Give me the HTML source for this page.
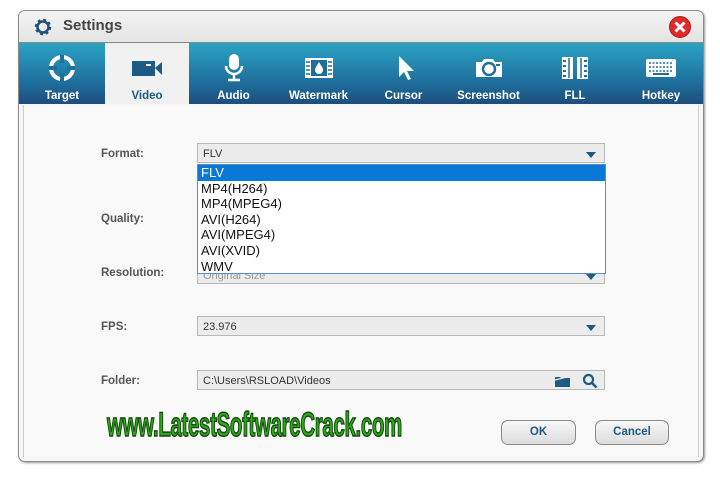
<!DOCTYPE html>
<html><head><style>
body{margin:0;width:720px;height:480px;background:#fff;position:relative;overflow:hidden;font-family:"Liberation Sans","DejaVu Sans",sans-serif}
.win{position:absolute;left:18px;top:10px;width:684px;height:450px;border:1px solid #8a8a8a;border-radius:7px;background:#f7f7f7;overflow:hidden;box-shadow:1px 1px 2px #999}
.title{position:absolute;left:0;top:0;width:684px;height:31px;background:linear-gradient(#f4f4f4,#e4e4e4);border-bottom:1px solid #888}
.title span{position:absolute;left:44px;top:6px;font-size:15px;font-weight:bold;color:#444}
.tabs{position:absolute;left:0;top:32px;width:684px;height:61px;background:linear-gradient(#2aa3c4,#1e6a98 70%,#1d4d7c)}
.tab{position:absolute;top:0;height:61px;text-align:center;color:#fff;font-size:11.5px;font-weight:bold}
.tab .l{position:absolute;bottom:2px;left:0;right:0}
.tab svg{position:absolute;left:50%;top:10px;transform:translateX(-50%)}
.sel{background:#f1f1f1;color:#1c5a86}
.body{position:absolute;left:4px;top:94px;width:674px;height:352px;background:#f9f9f9;border-left:1px solid #ccc;border-right:1px solid #ccc}
.lab{position:absolute;left:77px;font-size:11.5px;font-weight:bold;color:#555}
.dd{position:absolute;left:173px;width:408px;height:20px;background:#ececec;border:1px solid #b8b8b8;font-size:11px;color:#333;line-height:20px;padding-left:5px;box-sizing:border-box}
.arr{position:absolute;right:8px;top:8px;width:0;height:0;border-left:5px solid transparent;border-right:5px solid transparent;border-top:6px solid #1d5b85}
.list{position:absolute;left:173px;top:59px;width:409px;height:110px;background:#fff;border:1px solid #5a8ec6;box-sizing:border-box;font-size:13px;color:#111;line-height:15.6px}
.list div{padding-left:3px}
.btn{position:absolute;top:315px;height:23px;border:1px solid #8a8a8a;border-radius:7px;background:linear-gradient(#f8f8f8,#dcdcdc);text-align:center;line-height:23px;font-size:11.5px;font-weight:bold;color:#1d5b85}
.wm{position:absolute;left:107px;top:406px;font-size:34px;font-weight:bold;color:#2fa61c;-webkit-text-stroke:1.5px #124a0c;transform:scaleX(0.6);transform-origin:left;letter-spacing:-0.5px;font-family:"Liberation Sans Narrow","Liberation Sans",sans-serif}
</style></head><body>
<div class="win">
<div class="title">
<svg style="position:absolute;left:14px;top:6px" width="20" height="20" viewBox="0 0 20 20"><circle cx="10" cy="10" r="6.5" fill="none" stroke="#1d4f78" stroke-width="3.5" stroke-dasharray="2.6 2.5"/><circle cx="10" cy="10" r="5.5" fill="none" stroke="#1d4f78" stroke-width="2.5"/></svg>
<span>Settings</span>
<svg style="position:absolute;left:648px;top:5px" width="26" height="22" viewBox="0 0 26 22"><circle cx="13" cy="11" r="10.5" fill="#e02a2a" stroke="#b01a1a"/><path d="M8.5 6.5l9 9M17.5 6.5l-9 9" stroke="#fff" stroke-width="3"/></svg>
</div>
<div class="tabs">
<div class="tab" style="left:0;width:86px"><svg width="30" height="30" viewBox="0 0 30 30"><circle cx="15" cy="15" r="11" fill="none" stroke="#fff" stroke-width="4"/><path d="M15 2v8M15 20v8M2 15h8M20 15h8" stroke="#1f6e9b" stroke-width="4"/></svg><div class="l">Target</div></div>
<div class="tab sel" style="left:86px;width:84px"><svg width="34" height="30" viewBox="0 0 34 30"><rect x="2" y="8" width="23" height="15" fill="#1d5b85"/><path d="M25 15l7-6v13z" fill="#1d5b85"/><rect x="16" y="11" width="5" height="2" fill="#f1f1f1"/></svg><div class="l">Video</div></div>
<div class="tab" style="left:172px;width:85px"><svg width="30" height="30" viewBox="0 0 30 30"><rect x="10" y="1" width="10" height="16" rx="5" fill="#fff"/><path d="M7 13a8 8 0 0 0 16 0" fill="none" stroke="#fff" stroke-width="2.5"/><path d="M15 21v5M9 27h12" stroke="#fff" stroke-width="2.5"/></svg><div class="l">Audio</div></div>
<div class="tab" style="left:257px;width:85px"><svg width="32" height="30" viewBox="0 0 32 30"><rect x="2" y="5" width="28" height="20" fill="#fff"/><rect x="8" y="7" width="16" height="16" fill="#1f6e9b"/><path d="M16 9c-3 5-4 6-4 8a4 4 0 0 0 8 0c0-2-1-3-4-8z" fill="#fff"/><path d="M3 9h4M3 13h4M3 17h4M3 21h4M25 9h4M25 13h4M25 17h4M25 21h4" stroke="#1f6e9b" stroke-width="1.5"/></svg><div class="l">Watermark</div></div>
<div class="tab" style="left:342px;width:85px"><svg width="30" height="30" viewBox="0 0 30 30"><path d="M10 3v21l5-5 4 8 3-1-4-8h7z" fill="#fff"/></svg><div class="l">Cursor</div></div>
<div class="tab" style="left:427px;width:85px"><svg width="32" height="30" viewBox="0 0 32 30"><path d="M3 9h6l2-3h9l2 3h7v15H3z" fill="#fff"/><circle cx="16" cy="16" r="6" fill="none" stroke="#1f6e9b" stroke-width="2.5"/><rect x="23" y="11" width="4" height="2" fill="#1f6e9b"/></svg><div class="l">Screenshot</div></div>
<div class="tab" style="left:512px;width:88px"><svg width="32" height="30" viewBox="0 0 32 30"><rect x="3" y="4" width="11" height="22" fill="#fff"/><rect x="18" y="4" width="11" height="22" fill="#fff"/><path d="M4 8h3M4 13h3M4 18h3M4 23h3M25 8h3M25 13h3M25 18h3M25 23h3" stroke="#1f6e9b" stroke-width="2"/><path d="M10 5v20M22 5v20" stroke="#1f6e9b" stroke-width="1.5"/></svg><div class="l">FLL</div></div>
<div class="tab" style="left:600px;width:84px"><svg width="34" height="30" viewBox="0 0 34 30"><rect x="2" y="6" width="30" height="18" rx="2" fill="#fff"/><path d="M5 10h24M5 14h24M5 18h24" stroke="#1f6e9b" stroke-width="1.5" stroke-dasharray="2 1.5"/><rect x="9" y="20" width="16" height="2" fill="#1f6e9b"/></svg><div class="l">Hotkey</div></div>
</div>
<div class="body">
<div class="lab" style="top:43px">Format:</div>
<div class="dd" style="top:38px">FLV<div class="arr"></div></div>
<div class="lab" style="top:108px">Quality:</div>
<div class="lab" style="top:162px">Resolution:</div>
<div class="dd" style="top:160px;height:19px;color:#999">Original Size<div class="arr"></div></div>
<div class="list">
<div style="background:#0a78d7;color:#fff">FLV</div><div>MP4(H264)</div><div>MP4(MPEG4)</div><div>AVI(H264)</div><div>AVI(MPEG4)</div><div>AVI(XVID)</div><div>WMV</div>
</div>
<div class="lab" style="top:216px">FPS:</div>
<div class="dd" style="top:211px">23.976<div class="arr"></div></div>
<div class="lab" style="top:270px">Folder:</div>
<div class="dd" style="top:265px">C:\Users\RSLOAD\Videos
<svg style="position:absolute;right:32px;top:3px" width="18" height="14" viewBox="0 0 18 14"><path d="M1 3h5l1 1h9v9H1z" fill="#1d5b85"/><path d="M1 6l16-4" stroke="#ececec" stroke-width="1.2"/></svg>
<svg style="position:absolute;right:6px;top:2px" width="16" height="16" viewBox="0 0 16 16"><circle cx="6.5" cy="6.5" r="4.5" fill="none" stroke="#1d5b85" stroke-width="2.2"/><path d="M10 10l4.5 4.5" stroke="#1d5b85" stroke-width="2.6"/></svg>
</div>
<div class="btn" style="left:477px;width:73px">OK</div>
<div class="btn" style="left:571px;width:72px">Cancel</div>
</div>
</div>
<div class="wm">www.LatestSoftwareCrack.com</div>
</body></html>
